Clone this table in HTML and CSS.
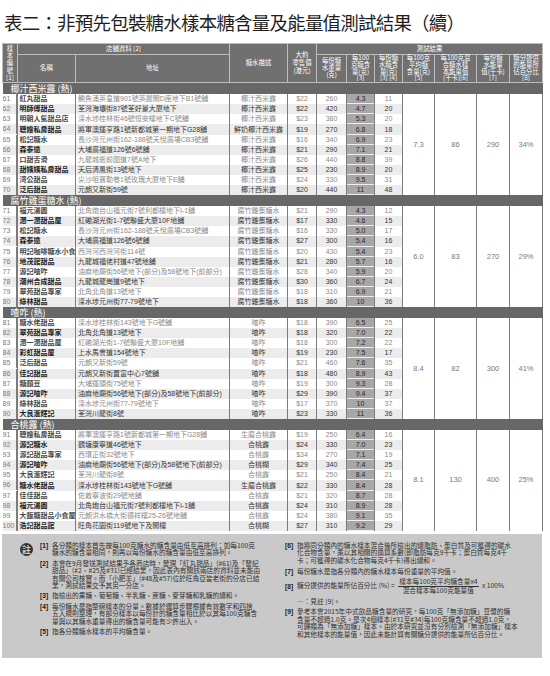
FILE: index.html
```html
<!DOCTYPE html>
<html lang="zh-Hant">
<head>
<meta charset="utf-8">
<title>表二</title>
<link rel="stylesheet" href="styles.css">
</head>
<body>
<div class="page">
<h1 class="title">表二：非預先包裝糖水樣本糖含量及能量值測試結果（續）</h1>
<table class="tbl">
<colgroup>
<col style="width:15px"><col style="width:58px"><col style="width:154px"><col style="width:58px"><col style="width:29px"><col style="width:30px"><col style="width:28px"><col style="width:28px"><col style="width:32px"><col style="width:42px"><col style="width:33px"><col style="width:33px">
</colgroup>
<thead>
<tr class="h1">
<th rowspan="2" class="hn">樣<br>本<br>編<br>號<br>[1]</th>
<th colspan="2">店舖資料 [2]</th>
<th rowspan="2">糖水描述</th>
<th rowspan="2" class="hp">大約<br>零售價<br>(港元)</th>
<th colspan="7">測試結果</th>
</tr>
<tr class="h2">
<th>名稱</th>
<th>地址</th>
<th>每份糖<br>水重量<br>(克)</th>
<th>每100<br>克糖含<br>量(克)<br>[3]</th>
<th>每份糖<br>水糖含<br>量(克)<br>[3] [4]</th>
<th>每100克<br>平均糖<br>含量(克)<br>[5]</th>
<th>每100克混<br>合糖水樣<br>本能量值<br>(千卡)[6]</th>
<th>每份糖<br>水能量<br>值(千卡)<br>[7]</th>
<th>糖分提供<br>的能量所<br>佔百分比<br>[8]</th>
</tr>
</thead>
<tbody>
<tr class="band"><td colspan="12">椰汁西米露 (熱)</td></tr>
<tr class="r"><td class="n">61</td><td class="nm">紅丸甜品</td><td class="ad">鰂魚涌英皇道901號英麗閣D座地下B1號舖</td><td class="c">椰汁西米露</td><td class="c">$22</td><td class="c">260</td><td class="s">4.3</td><td class="c">11</td><td class="m" rowspan="10">7.3</td><td class="m" rowspan="10">86</td><td class="m" rowspan="10">290</td><td class="m last" rowspan="10">34%</td></tr>
<tr class="r e"><td class="n">62</td><td class="nm">明師傅甜品</td><td class="ad">荃灣海壩街87號荃好景大廈地下</td><td class="c">椰汁西米露</td><td class="c">$22</td><td class="c">420</td><td class="s">4.7</td><td class="c">20</td></tr>
<tr class="r"><td class="n">63</td><td class="nm">明朝人氣甜品店</td><td class="ad">深水埗桂林街46號恒安樓地下C號舖</td><td class="c">椰汁西米露</td><td class="c">$23</td><td class="c">380</td><td class="s">5.3</td><td class="c">20</td></tr>
<tr class="r e"><td class="n">64</td><td class="nm">聰嫂私房甜品</td><td class="ad">將軍澳運亨路1號新都城第一期地下G28舖</td><td class="c">鮮奶椰汁西米露</td><td class="c">$19</td><td class="c">270</td><td class="s">6.8</td><td class="c">18</td></tr>
<tr class="r"><td class="n">65</td><td class="nm">松記糖水</td><td class="ad">長沙灣元州街162-188號天悅廣場CB3號舖</td><td class="c">椰汁西米露</td><td class="c">$16</td><td class="c">340</td><td class="s">6.9</td><td class="c">23</td></tr>
<tr class="r e"><td class="n">66</td><td class="nm">森泰遠</td><td class="ad">大埔廣福道126號6號舖</td><td class="c">椰汁西米露</td><td class="c">$21</td><td class="c">290</td><td class="s">7.1</td><td class="c">21</td></tr>
<tr class="r"><td class="n">67</td><td class="nm">口甜舌滑</td><td class="ad">九龍城衙前圍道7號A地下</td><td class="c">椰汁西米露</td><td class="c">$26</td><td class="c">440</td><td class="s">8.8</td><td class="c">39</td></tr>
<tr class="r e"><td class="n">68</td><td class="nm">甜姨姨私房甜品</td><td class="ad">天后清風街13號地下</td><td class="c">椰汁西米露</td><td class="c">$25</td><td class="c">230</td><td class="s">8.9</td><td class="c">20</td></tr>
<tr class="r"><td class="n">69</td><td class="nm">湾公甜品</td><td class="ad">尖沙咀寶勒巷1號玫瑰大廈地下E舖</td><td class="c">椰汁西米露</td><td class="c">$24</td><td class="c">330</td><td class="s">9.5</td><td class="c">31</td></tr>
<tr class="r e"><td class="n">70</td><td class="nm">泛后甜品</td><td class="ad">元朗又新街59號</td><td class="c">椰汁西米露</td><td class="c">$20</td><td class="c">440</td><td class="s">11</td><td class="c">48</td></tr>

<tr class="band"><td colspan="12">腐竹雞蛋糖水 (熱)</td></tr>
<tr class="r"><td class="n">71</td><td class="nm">福元湯圓</td><td class="ad">北角炮台山福元街7號利都樓地下I-1舖</td><td class="c">腐竹雞蛋糖水</td><td class="c">$21</td><td class="c">290</td><td class="s">4.3</td><td class="c">12</td><td class="m" rowspan="10">6.0</td><td class="m" rowspan="10">83</td><td class="m" rowspan="10">270</td><td class="m last" rowspan="10">29%</td></tr>
<tr class="r e"><td class="n">72</td><td class="nm">潤一潤甜品屋</td><td class="ad">紅磡湖光街1-7號聯盛大廈10F地舖</td><td class="c">腐竹雞蛋糖水</td><td class="c">$17</td><td class="c">330</td><td class="s">4.6</td><td class="c">15</td></tr>
<tr class="r"><td class="n">73</td><td class="nm">松記糖水</td><td class="ad">長沙灣元州街162-188號天悅廣場CB3號舖</td><td class="c">腐竹雞蛋糖水</td><td class="c">$16</td><td class="c">330</td><td class="s">5.0</td><td class="c">17</td></tr>
<tr class="r e"><td class="n">74</td><td class="nm">森泰遠</td><td class="ad">大埔廣福道126號6號舖</td><td class="c">腐竹雞蛋糖水</td><td class="c">$27</td><td class="c">300</td><td class="s">5.4</td><td class="c">16</td></tr>
<tr class="r"><td class="n">75</td><td class="nm">明記咖啡糖水小食</td><td class="ad">西灣河西灣河街114號</td><td class="c">腐竹雞蛋糖水</td><td class="c">$20</td><td class="c">430</td><td class="s">5.4</td><td class="c">23</td></tr>
<tr class="r e"><td class="n">76</td><td class="nm">地茂館甜品</td><td class="ad">九龍城福佬村道47號地舖</td><td class="c">腐竹雞蛋糖水</td><td class="c">$21</td><td class="c">280</td><td class="s">5.7</td><td class="c">16</td></tr>
<tr class="r"><td class="n">77</td><td class="nm">源記喳咋</td><td class="ad">油麻地廟街56號地下(部分)及58號地下(前部分)</td><td class="c">腐竹雞蛋糖水</td><td class="c">$28</td><td class="c">340</td><td class="s">5.9</td><td class="c">20</td></tr>
<tr class="r e"><td class="n">78</td><td class="nm">潮州合成甜品</td><td class="ad">九龍城龍崗道9號地下</td><td class="c">腐竹雞蛋糖水</td><td class="c">$30</td><td class="c">360</td><td class="s">6.7</td><td class="c">24</td></tr>
<tr class="r"><td class="n">79</td><td class="nm">翠苑甜品專家</td><td class="ad">北角北角道13號地下</td><td class="c">腐竹雞蛋糖水</td><td class="c">$18</td><td class="c">310</td><td class="s">6.9</td><td class="c">21</td></tr>
<tr class="r e"><td class="n">80</td><td class="nm">綠林甜品</td><td class="ad">深水埗元州街77-79號地下</td><td class="c">腐竹雞蛋糖水</td><td class="c">$18</td><td class="c">360</td><td class="s">10</td><td class="c">36</td></tr>

<tr class="band"><td colspan="12">喳咋 (熱)</td></tr>
<tr class="r"><td class="n">81</td><td class="nm">糖水佬甜品</td><td class="ad">深水埗桂林街143號地下G號舖</td><td class="c">喳咋</td><td class="c">$18</td><td class="c">390</td><td class="s">6.5</td><td class="c">25</td><td class="m" rowspan="10">8.4</td><td class="m" rowspan="10">82</td><td class="m" rowspan="10">300</td><td class="m last" rowspan="10">41%</td></tr>
<tr class="r e"><td class="n">82</td><td class="nm">翠苑甜品專家</td><td class="ad">北角北角道13號地下</td><td class="c">喳咋</td><td class="c">$18</td><td class="c">320</td><td class="s">7.0</td><td class="c">22</td></tr>
<tr class="r"><td class="n">83</td><td class="nm">潤一潤甜品屋</td><td class="ad">紅磡湖光街1-7號聯盛大廈10F地舖</td><td class="c">喳咋</td><td class="c">$18</td><td class="c">300</td><td class="s">7.2</td><td class="c">22</td></tr>
<tr class="r e"><td class="n">84</td><td class="nm">彩虹甜品屋</td><td class="ad">上水馬會道154號地下</td><td class="c">喳咋</td><td class="c">$19</td><td class="c">230</td><td class="s">7.5</td><td class="c">17</td></tr>
<tr class="r"><td class="n">85</td><td class="nm">泛后甜品</td><td class="ad">元朗又新街59號</td><td class="c">喳咋</td><td class="c">$21</td><td class="c">460</td><td class="s">7.6</td><td class="c">35</td></tr>
<tr class="r e"><td class="n">86</td><td class="nm">佳記甜品</td><td class="ad">元朗又新街置富中心7號舖</td><td class="c">喳咋</td><td class="c">$18</td><td class="c">480</td><td class="s">8.9</td><td class="c">43</td></tr>
<tr class="r"><td class="n">87</td><td class="nm">糖顏豆</td><td class="ad">大埔運頭街75號地下</td><td class="c">喳咋</td><td class="c">$19</td><td class="c">300</td><td class="s">9.3</td><td class="c">28</td></tr>
<tr class="r e"><td class="n">88</td><td class="nm">源記喳咋</td><td class="ad">油麻地廟街56號地下(部分)及58號地下(前部分)</td><td class="c">喳咋</td><td class="c">$29</td><td class="c">390</td><td class="s">9.4</td><td class="c">37</td></tr>
<tr class="r"><td class="n">89</td><td class="nm">綠林甜品</td><td class="ad">深水埗元州街77-79號地下</td><td class="c">喳咋</td><td class="c">$17</td><td class="c">370</td><td class="s">10</td><td class="c">37</td></tr>
<tr class="r e"><td class="n">90</td><td class="nm">大良滙輝記</td><td class="ad">荃灣川龍街8號</td><td class="c">喳咋</td><td class="c">$23</td><td class="c">330</td><td class="s">11</td><td class="c">36</td></tr>

<tr class="band"><td colspan="12">合桃露 (熱)</td></tr>
<tr class="r"><td class="n">91</td><td class="nm">聰嫂私房甜品</td><td class="ad">將軍澳運亨路1號新都城第一期地下G28舖</td><td class="c">生磨合桃露</td><td class="c">$19</td><td class="c">250</td><td class="s">6.4</td><td class="c">16</td><td class="m" rowspan="10">8.1</td><td class="m" rowspan="10">130</td><td class="m" rowspan="10">400</td><td class="m last" rowspan="10">25%</td></tr>
<tr class="r e"><td class="n">92</td><td class="nm">源記糖水</td><td class="ad">觀塘康寧道46號地下</td><td class="c">合桃露</td><td class="c">$24</td><td class="c">330</td><td class="s">7.0</td><td class="c">23</td></tr>
<tr class="r"><td class="n">93</td><td class="nm">源記甜品專家</td><td class="ad">西環正街32號地下</td><td class="c">合桃露</td><td class="c">$34</td><td class="c">270</td><td class="s">7.1</td><td class="c">19</td></tr>
<tr class="r e"><td class="n">94</td><td class="nm">源記喳咋</td><td class="ad">油麻地廟街56號地下(部分)及58號地下(前部分)</td><td class="c">合桃糊</td><td class="c">$29</td><td class="c">340</td><td class="s">7.4</td><td class="c">25</td></tr>
<tr class="r"><td class="n">95</td><td class="nm">大良滙輝記</td><td class="ad">荃灣川龍街8號</td><td class="c">合桃露</td><td class="c">$21</td><td class="c">250</td><td class="s">8.4</td><td class="c">21</td></tr>
<tr class="r e"><td class="n">96</td><td class="nm">糖水佬甜品</td><td class="ad">深水埗桂林街143號地下G號舖</td><td class="c">生磨合桃露</td><td class="c">$22</td><td class="c">330</td><td class="s">8.4</td><td class="c">28</td></tr>
<tr class="r"><td class="n">97</td><td class="nm">佳佳甜品</td><td class="ad">佐敦寧波街29號地舖</td><td class="c">合桃露</td><td class="c">$21</td><td class="c">320</td><td class="s">8.7</td><td class="c">28</td></tr>
<tr class="r e"><td class="n">98</td><td class="nm">福元湯圓</td><td class="ad">北角炮台山福元街7號利都樓地下I-1舖</td><td class="c">合桃露</td><td class="c">$24</td><td class="c">310</td><td class="s">8.9</td><td class="c">28</td></tr>
<tr class="r"><td class="n">99</td><td class="nm">大飯糖甜品小食屋</td><td class="ad">元朗洪水橋大街德祥樓25-26號地舖</td><td class="c">合桃露</td><td class="c">$24</td><td class="c">380</td><td class="s">9.1</td><td class="c">35</td></tr>
<tr class="r e"><td class="n">100</td><td class="nm">浩記甜品館</td><td class="ad">旺角花園街119號地下及閣樓</td><td class="c">合桃糊</td><td class="c">$27</td><td class="c">310</td><td class="s">9.2</td><td class="c">29</td></tr>
</tbody>
</table>

<div class="notes">
<div class="ico"><span>註</span></div>
<div class="col">
<div class="n"><b>[1]</b><span>各分類的樣本首先按每100克糖水的糖含量由低至高排列；如每100克<br>糖水的糖含量相同，則再以每份糖水的糖含量由低至高排列。</span></div>
<div class="n"><b>[2]</b><span>本會在9月發送測試結果予各商店時，發現「紅丸甜品」(#61)及「發記<br>甜品」(#2、#25及#31)已經結業，因此表內有關該兩店的資料並未能由<br>有關公司核實。而「小肥羊」(#48及#57)位於旺角亞皆老街的分店已結<br>業，測試結果交予其另一分店。</span></div>
<div class="n"><b>[3]</b><span>指檢出的果糖、葡萄糖、半乳糖、蔗糖、麥芽糖和乳糖的總和。</span></div>
<div class="n"><b>[4]</b><span>每份糖水是指整碗樣本的分量。數據於運算步驟根據有效數字和四捨<br>五入規則整理，有部分樣本以每份計的糖含量相比於以其每100克糖含<br>量與以其糖水重量得出的糖含量可能有少許出入。</span></div>
<div class="n"><b>[5]</b><span>指各分類糖水樣本的平均糖含量。</span></div>
</div>
<div class="col right">
<div class="n"><b>[6]</b><span>指將同分類內的糖水樣本混合後所檢出的總脂肪、蛋白質及可獲得的碳水<br>化合物含量，乘以其相關的換算系數(即脂肪每克9千卡；蛋白質每克4千<br>卡；可獲得的碳水化合物每克4千卡)得出總和。</span></div>
<div class="n"><b>[7]</b><span>每份糖水是指各分類內的糖水樣本每份重量的平均值。</span></div>
<div class="n f8"><b>[8]</b><span>糖分提供的能量所佔百分比 (%) = <span class="frac"><span class="num">樣本每100克平均糖含量x4</span><span class="den">混合樣本每100克能量值</span></span> x 100%</span></div>
<div class="n"><b></b><span>—：見註 [9]。</span></div>
<div class="n"><b>[9]</b><span>參考本會2015年中式飲品糖含量的研究，每100克「無添加糖」豆漿的糖<br>含量不超過1.0克。是次4個樣本(#31至#34)每100克糖含量不超過1.0克，<br>可歸類為「無添加糖」樣本。由於本研究並沒有分別檢測「無添加糖」樣本<br>和其他樣本的能量值，因此未能計算有關糖分提供的能量所佔百分比。</span></div>
</div>
</div>
</div>
</body>
</html>
```
FILE: styles.css
```css
* { box-sizing: border-box; }
html, body { margin: 0; padding: 0; background: #fff; }
body {
  width: 550px;
  height: 676px;
  overflow: hidden;
  font-family: "Liberation Sans", "Noto Sans CJK TC", sans-serif;
  color: #333;
}
.page { padding: 11px 0 0 2px; }

.title {
  margin: 0 0 0 2px;
  height: 32px;
  font-family: "Noto Sans CJK TC", sans-serif;
  font-size: 18.5px;
  line-height: 23px;
  font-weight: 400;
  letter-spacing: -0.8px;
  color: #1e1e1e;
  white-space: nowrap;
}

.tbl {
  border-collapse: collapse;
  table-layout: fixed;
  width: 540px;
}
.tbl th {
  background: #707070;
  color: #fff;
  font-weight: 400;
  font-size: 6.4px;
  line-height: 6.8px;
  border: 1px solid #bdbdbd;
  text-align: center;
  vertical-align: middle;
  padding: 0;
  font-family: "Noto Sans CJK TC", sans-serif;
}
.tbl th.hn { line-height: 7.3px; }
.tbl th.hp { line-height: 8px; }
.tbl tr.h1 { height: 11px; }
.tbl tr.h2 { height: 27px; }

.tbl tr.band td {
  background: #676767;
  color: #fff;
  font-family: "Noto Sans CJK TC", sans-serif;
  font-size: 9px;
  line-height: 11px;
  height: 11px;
  padding: 0 0 0 8px;
  border: none;
  border-right: 1px solid #676767;
}

.tbl tr.r { height: 10.1px; }
.tbl td {
  font-size: 7px;
  line-height: 10px;
  padding: 0 1px;
  white-space: nowrap;
  overflow: hidden;
  color: #8a8a8a;
  border-left: 1px solid #7c7c7c;
  border-right: 1px solid #7c7c7c;
  vertical-align: middle;
}
.tbl td.n { border-left: none; text-align: center; color: #7a7a7a; padding: 0; }
.tbl td.nm { font-weight: 700; color: #4a4a4a; padding-left: 1.5px; }
.tbl td.ad { padding-left: 2px; }
.tbl td.c { text-align: center; }

.tbl tr.e td { background: #ececec; color: #353535; }
.tbl tr.e td.n { color: #7a7a7a; }
.tbl tr.e td.nm { color: #1c1c1c; }

.tbl tr td.s {
  text-align: center;
  color: #262626;
  background: linear-gradient(#a7a7a7 calc(100% - 1px), #eeeeee 0);
}
.tbl tr td.m {
  background: #fff;
  text-align: center;
  font-size: 7.5px;
  color: #7a7a7a;
}

.notes {
  margin-top: 3px;
  width: 540px;
  height: 124px;
  background: #c9c9c9;
  display: grid;
  grid-template-columns: 38px 235px 267px;
  padding-top: 8px;
  font-family: "Noto Sans CJK TC", sans-serif;
  font-size: 6.7px;
  line-height: 7.4px;
  color: #303030;
}
.ico span {
  display: flex;
  align-items: center;
  justify-content: center;
  width: 13px;
  height: 13px;
  margin: 1px 0 0 18px;
  border-radius: 50%;
  background: #333;
  color: #d0d0d0;
  font-size: 9px;
  line-height: 1;
  font-weight: 700;
}
.col { display: flex; flex-direction: column; gap: 3px; }
.col.right { padding-left: 10px; gap: 3.4px; }
.n { display: flex; white-space: nowrap; }
.n b {
  flex: none;
  width: 12px;
  font-family: "Liberation Sans", sans-serif;
  font-weight: 700;
  color: #222;
}
.f8 { align-items: center; }
.frac {
  display: inline-flex;
  flex-direction: column;
  vertical-align: middle;
  text-align: center;
  margin: 0 2px;
}
.num { border-bottom: 0.8px solid #333; padding: 0 1px; }
.den { padding: 0 1px; }
```
